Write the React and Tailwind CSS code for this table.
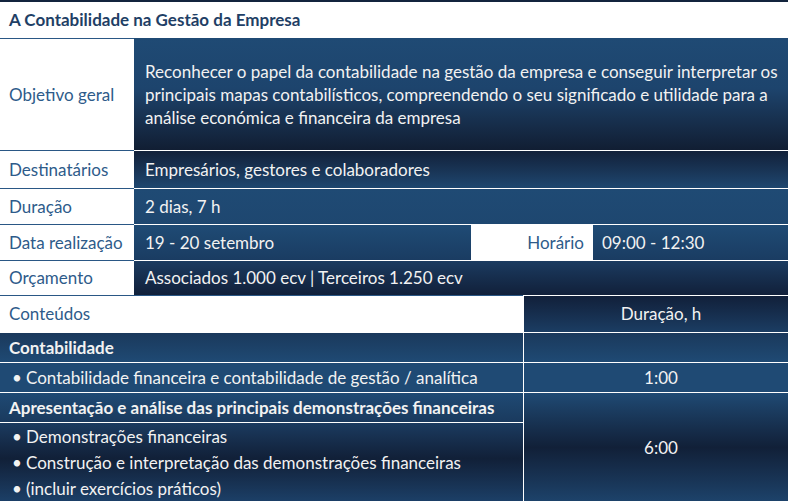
export default function App() {
  const label = "text-[#2e5b8a] text-[17px] pl-[9px] flex items-center bg-white";
  const cellTxt = "text-[#f2f2f2] text-[17px] pl-[11px] flex items-center";
  return (
    <div className="w-[788px] h-[501px] overflow-hidden bg-white font-['Lato',sans-serif]">
      <div className="w-[798px] flex flex-col">
        {/* Title */}
        <div className="h-[38px] border-t-2 border-[#13243d] flex items-center pl-[9px] text-[17px] font-bold text-[#1f3f66]">
          A Contabilidade na Gestão da Empresa
        </div>
        {/* Objetivo */}
        <div className="flex h-[113px]">
          <div className={`${label} w-[134px] border-t border-b border-[#2a5785]`}>Objetivo geral</div>
          <div className={`flex-1 border-b border-white bg-linear-to-b from-[#1f4a74] via-[#1d446d] via-45% to-[#111e33] ${cellTxt} leading-[23px]`}>
            <div className="pt-[1px]">
              <div>Reconhecer o papel da contabilidade na gestão da empresa e conseguir interpretar os</div>
              <div>principais mapas contabilísticos, compreendendo o seu significado e utilidade para a</div>
              <div>análise económica e financeira da empresa</div>
            </div>
          </div>
        </div>
        {/* Destinatários */}
        <div className="flex h-[38px]">
          <div className={`${label} w-[134px] border-b border-[#2a5785]`}>Destinatários</div>
          <div className={`flex-1 border-b border-white bg-linear-to-b from-[#12213a] to-[#1e4770] ${cellTxt}`}>
            Empresários, gestores e colaboradores
          </div>
        </div>
        {/* Duração */}
        <div className="flex h-[36px]">
          <div className={`${label} w-[134px] border-b border-[#2a5785]`}>Duração</div>
          <div className={`flex-1 border-b border-white bg-linear-to-b from-[#1f4a74] to-[#1e4770] ${cellTxt}`}>
            2 dias, 7 h
          </div>
        </div>
        {/* Data realização */}
        <div className="flex h-[36px]">
          <div className={`${label} w-[134px] border-b border-[#2a5785]`}>Data realização</div>
          <div className={`w-[337px] border-b border-white bg-linear-to-b from-[#1f4b75] to-[#1a3c62] ${cellTxt}`}>
            19 - 20 setembro
          </div>
          <div className="w-[122px] border-b border-white bg-white flex items-center justify-end pr-[9px] text-[17px] text-[#2e5b8a]">
            Horário
          </div>
          <div className="flex-1 border-b border-white bg-linear-to-b from-[#1f4b75] to-[#1a3c62] pl-[9px] text-[#f2f2f2] text-[17px] flex items-center">
            09:00 - 12:30
          </div>
        </div>
        {/* Orçamento */}
        <div className="flex h-[34px]">
          <div className={`${label} w-[134px]`}>Orçamento</div>
          <div className={`flex-1 bg-linear-to-b from-[#1b3b60] to-[#11203a] ${cellTxt}`}>
            Associados 1.000 ecv | Terceiros 1.250 ecv
          </div>
        </div>
        {/* Conteúdos header */}
        <div className="flex h-[38px]">
          <div className={`${label} w-[523px] border-t border-[#2a5785] border-b border-b-white`}>Conteúdos</div>
          <div className="w-[1px] bg-white"></div>
          <div className="flex-1 border-t border-b border-white bg-linear-to-b from-[#11203a] to-[#1b3d63] text-[#f2f2f2] text-[17px] flex items-center justify-center">
            Duração, h
          </div>
        </div>
        {/* Lower section */}
        <div className="grid grid-cols-[523px_1px_1fr] grid-rows-[30px_30px_30px_79px]">
          <div className="row-start-1 col-start-1 border-b border-white bg-linear-to-b from-[#1a395c] to-[#1f4a74] text-[#f2f2f2] text-[17px] font-bold pl-[9px] flex items-center">
            Contabilidade
          </div>
          <div className="row-start-2 col-start-1 border-b border-white bg-[#1f4a74] text-[#f2f2f2] text-[17px] flex items-center pl-[12px]">
            <span className="w-[14px]">•</span>Contabilidade financeira e contabilidade de gestão / analítica
          </div>
          <div className="row-start-3 col-start-1 border-b border-white bg-linear-to-b from-[#1f4a74] to-[#1a3a5e] text-[#f2f2f2] text-[17px] font-bold pl-[9px] flex items-center">
            Apresentação e análise das principais demonstrações financeiras
          </div>
          <div className="row-start-4 col-start-1 bg-linear-to-b from-[#1b3b60] via-[#112038] via-45% to-[#1c4068] text-[#f2f2f2] text-[17px] leading-[26px] pl-[12px] pt-[1px]">
            <div className="flex"><span className="w-[14px]">•</span>Demonstrações financeiras</div>
            <div className="flex"><span className="w-[14px]">•</span>Construção e interpretação das demonstrações financeiras</div>
            <div className="flex"><span className="w-[14px]">•</span>(incluir exercícios práticos)</div>
          </div>
          <div className="row-start-1 row-span-4 col-start-2 bg-white"></div>
          <div className="row-start-1 col-start-3 border-b border-white bg-linear-to-b from-[#1a395c] to-[#1f4a74]"></div>
          <div className="row-start-2 col-start-3 border-b border-white bg-[#1f4a74] text-[#f2f2f2] text-[17px] flex items-center justify-center">
            1:00
          </div>
          <div className="row-start-3 row-span-2 col-start-3 bg-linear-to-b from-[#1f4a74] via-[#112038] via-50% to-[#1d436b] text-[#f2f2f2] text-[17px] flex items-center justify-center">
            6:00
          </div>
        </div>
      </div>
    </div>
  );
}
